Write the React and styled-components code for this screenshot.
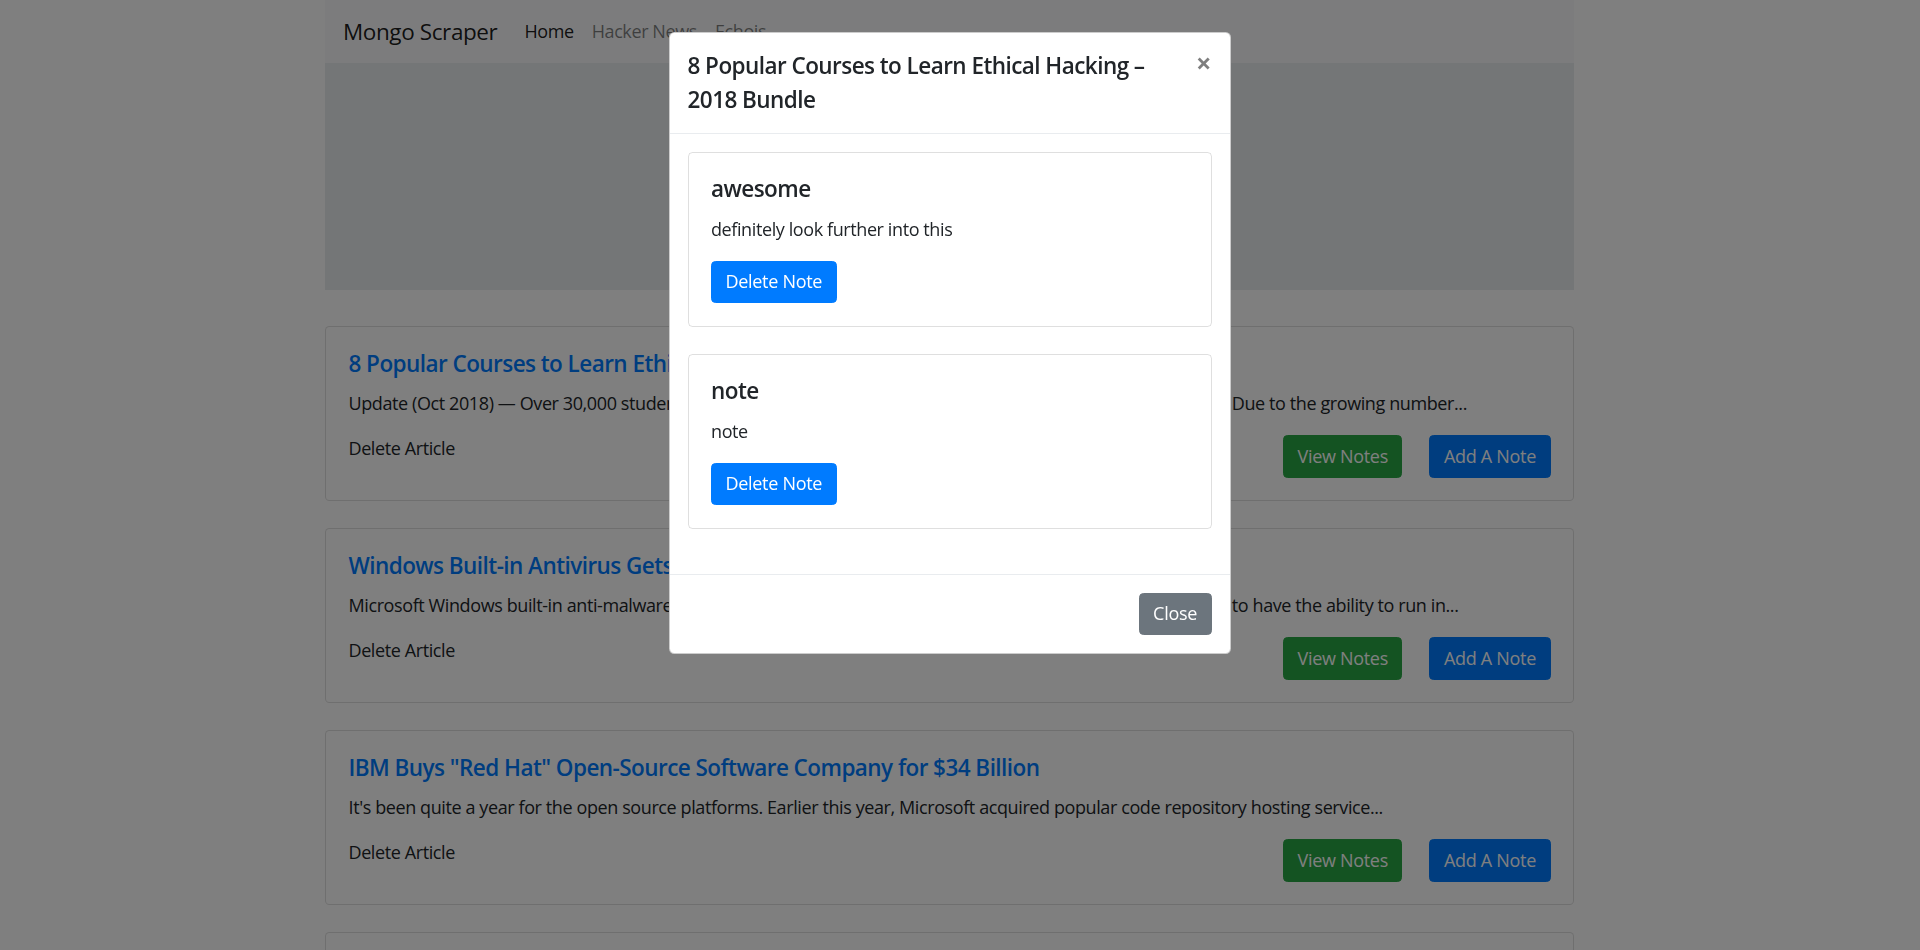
import React from 'react';
import styled, { createGlobalStyle } from 'styled-components';

const GlobalStyle = createGlobalStyle`
  html, body {
    margin: 0;
    height: 100%;
    overflow: hidden;
  }
  body {
    padding-right: 21px;
    font-family: "Segoe UI", "Open Sans", "Noto Sans", sans-serif;
    font-size: 18px;
    line-height: 1.5;
    letter-spacing: -0.4px;
    color: #212529;
    background: #fff;
  }
  * {
    box-sizing: border-box;
  }
`;

// Page behind the modal
const Container = styled.div`
  width: 1249px;
  margin: 0 auto;
`;

const Navbar = styled.nav`
  display: flex;
  align-items: center;
  padding: 9px 18px;
  background-color: #f8f9fa;
`;

const Brand = styled.a`
  font-size: 22.5px;
  line-height: 1.5;
  padding: 5.6px 0;
  margin-right: 18px;
  color: rgba(0, 0, 0, 0.9);
  text-decoration: none;
`;

const NavLinks = styled.div`
  display: flex;
`;

const NavLink = styled.a`
  padding: 9px;
  color: ${(p) => (p.active ? 'rgba(0, 0, 0, 0.9)' : 'rgba(0, 0, 0, 0.5)')};
  text-decoration: none;
`;

const Jumbotron = styled.div`
  height: 227px;
  margin-bottom: 36px;
  background-color: #e9ecef;
`;

const ArticleCard = styled.div`
  border: 1px solid rgba(0, 0, 0, 0.125);
  border-radius: 4.5px;
  padding: 22.5px;
  margin-bottom: 27px;
  background: #fff;
`;

const ArticleTitle = styled.a`
  display: block;
  font-size: 22.5px;
  font-weight: 600;
  letter-spacing: -0.55px;
  line-height: 1.2;
  margin-bottom: 13.5px;
  color: #007bff;
  text-decoration: none;
  white-space: nowrap;
`;

const Summary = styled.p`
  margin: 0 0 18px;
  white-space: nowrap;
`;

const ActionRow = styled.div`
  display: flex;
  align-items: flex-start;
`;

const DeleteArticle = styled.span`
  flex: 1;
`;

const Button = styled.button`
  font-family: inherit;
  font-size: 18px;
  line-height: 1.5;
  letter-spacing: -0.3px;
  padding: 6.75px 13.5px;
  border: 1px solid ${(p) => p.bg};
  border-radius: 4.5px;
  background-color: ${(p) => p.bg};
  color: #fff;
  cursor: pointer;
  margin-left: ${(p) => p.gap || 0}px;
`;

// Modal
const Backdrop = styled.div`
  position: fixed;
  inset: 0;
  background-color: rgba(0, 0, 0, 0.5);
`;

const ModalWrap = styled.div`
  position: fixed;
  inset: 0;
  padding-right: 21px;
  display: flex;
  justify-content: center;
  align-items: flex-start;
`;

const ModalContent = styled.div`
  width: 562px;
  margin-top: 32px;
  background: #fff;
  border: 1px solid rgba(0, 0, 0, 0.2);
  border-radius: 5.4px;
  display: flex;
  flex-direction: column;
`;

const ModalHeader = styled.div`
  display: flex;
  align-items: flex-start;
  padding: 16px 18px;
  border-bottom: 1px solid #e9ecef;
`;

const ModalTitle = styled.h5`
  margin: 0;
  font-size: 22.5px;
  font-weight: 600;
  letter-spacing: -0.55px;
  line-height: 1.5;
`;

const CloseX = styled.button`
  margin: -18px -18px -18px auto;
  padding: 18px;
  background: transparent;
  border: 0;
  font-family: inherit;
  font-size: 27px;
  font-weight: 700;
  line-height: 1;
  color: #000;
  opacity: 0.5;
`;

const ModalBody = styled.div`
  padding: 18px;
`;

const NoteCard = styled.div`
  border: 1px solid rgba(0, 0, 0, 0.125);
  border-radius: 4.5px;
  padding: 22.5px;
  margin-bottom: 27px;
`;

const NoteTitle = styled.h5`
  margin: 0 0 13.5px;
  font-size: 22.5px;
  font-weight: 600;
  letter-spacing: -0.55px;
  line-height: 1.2;
`;

const NoteText = styled.p`
  margin: 0 0 18px;
`;

const ModalFooter = styled.div`
  display: flex;
  justify-content: flex-end;
  padding: 18px;
  border-top: 1px solid #e9ecef;
`;

const articles = [
  {
    title: '8 Popular Courses to Learn Ethical Hacking – 2018 Bundle',
    summary:
      'Update (Oct 2018) — Over 30,000 students have already enrolled in this ethical hacking online training bundle. Due to the growing number...',
  },
  {
    title: 'Windows Built-in Antivirus Gets Sandboxing Feature — Enable It Now!',
    summary:
      'Microsoft Windows built-in anti-malware tool, Windows Defender, has become the very first antivirus software to have the ability to run in...',
  },
  {
    title: 'IBM Buys "Red Hat" Open-Source Software Company for $34 Billion',
    summary:
      "It's been quite a year for the open source platforms. Earlier this year, Microsoft acquired popular code repository hosting service...",
  },
  {
    title: 'Bitcoin Gold Hacked — Hackers Stole $18 Million Using 51% Attack',
    summary:
      'The cryptocurrency exchange was hit by a double spend attack that allowed hackers to steal millions in coins...',
  },
];

const notes = [
  { title: 'awesome', body: 'definitely look further into this' },
  { title: 'note', body: 'note' },
];

export default function App() {
  return (
    <>
      <GlobalStyle />
      <Container>
        <Navbar>
          <Brand href="#">Mongo Scraper</Brand>
          <NavLinks>
            <NavLink href="#" active>Home</NavLink>
            <NavLink href="#">Hacker News</NavLink>
            <NavLink href="#">Echojs</NavLink>
          </NavLinks>
        </Navbar>
        <Jumbotron />
        {articles.map((a) => (
          <ArticleCard key={a.title}>
            <ArticleTitle href="#">{a.title}</ArticleTitle>
            <Summary>{a.summary}</Summary>
            <ActionRow>
              <DeleteArticle>Delete Article</DeleteArticle>
              <Button bg="#28a745">View Notes</Button>
              <Button bg="#007bff" gap={27}>Add A Note</Button>
            </ActionRow>
          </ArticleCard>
        ))}
      </Container>

      <Backdrop />
      <ModalWrap>
        <ModalContent>
          <ModalHeader>
            <ModalTitle>
              8 Popular Courses to Learn Ethical Hacking –<br />2018 Bundle
            </ModalTitle>
            <CloseX>×</CloseX>
          </ModalHeader>
          <ModalBody>
            {notes.map((n) => (
              <NoteCard key={n.title}>
                <NoteTitle>{n.title}</NoteTitle>
                <NoteText>{n.body}</NoteText>
                <Button bg="#007bff">Delete Note</Button>
              </NoteCard>
            ))}
          </ModalBody>
          <ModalFooter>
            <Button bg="#6c757d">Close</Button>
          </ModalFooter>
        </ModalContent>
      </ModalWrap>
    </>
  );
}
